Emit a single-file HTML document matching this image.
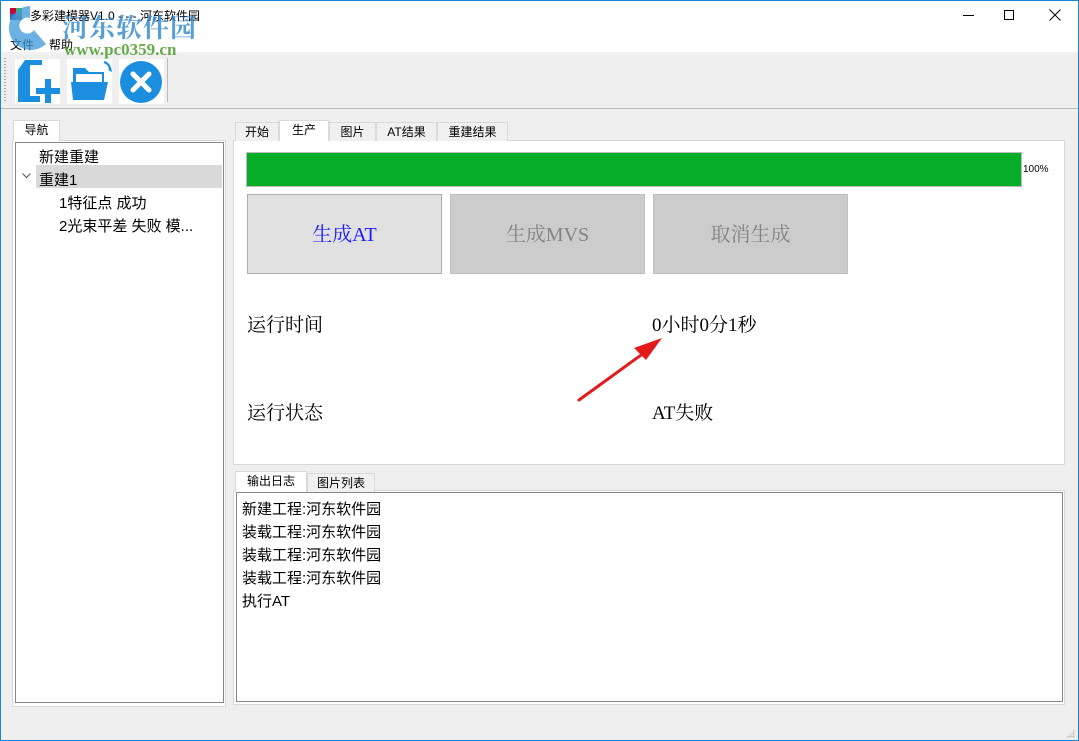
<!DOCTYPE html>
<html><head><meta charset="utf-8"><style>
*{margin:0;padding:0;box-sizing:border-box}
body{width:1079px;height:741px;overflow:hidden;background:#efefef;font-family:"Liberation Sans","Microsoft YaHei","Noto Sans CJK SC",sans-serif;position:relative;font-size:12px;color:#000}
.abs{position:absolute}
.serif{font-family:"Liberation Serif","Noto Serif CJK SC",serif}
.tab{position:absolute;height:19px;border:1px solid #d9d9d9;border-bottom:none;background:#f0f0f0;font-size:12px;text-align:center;line-height:18px}
.tab.sel{background:#fff;height:21px;top:-2px}
.btn{position:absolute;top:194px;width:195px;height:80px;border:1px solid #adadad;font-size:20px;text-align:center;line-height:80px}
.tree div{position:absolute;font-size:15px;white-space:nowrap}
.log div{font-size:15px;line-height:23px}
</style></head><body>
<div class="abs" style="left:0;top:0;width:1079px;height:741px;border:1px solid #1883d7;z-index:10;pointer-events:none"></div>
<div class="abs" style="left:0;top:0;width:1079px;height:53px;background:#fff"></div>
<div class="abs" style="left:0;top:52px;width:1079px;height:2px;background:#f2f2f2"></div>
<div class="abs" style="left:10px;top:8px;width:6px;height:6px;background:#c03"></div>
<div class="abs" style="left:16px;top:8px;width:6px;height:6px;background:#3b6"></div>
<div class="abs" style="left:10px;top:14px;width:6px;height:6px;background:#36c"></div>
<div class="abs" style="left:16px;top:14px;width:6px;height:6px;background:#777"></div>
<div class="abs" style="left:30px;top:7px;font-size:12px">多彩建模器V1.0 - - - 河东软件园</div>
<div class="abs" style="left:963px;top:15px;width:11px;height:1px;background:#000"></div>
<div class="abs" style="left:1004px;top:10px;width:10px;height:10px;border:1px solid #000"></div>
<svg class="abs" style="left:1049px;top:9px" width="12" height="12"><path d="M0.5 0.5 L11.5 11.5 M11.5 0.5 L0.5 11.5" stroke="#000" stroke-width="1"/></svg>
<div class="abs" style="left:10px;top:36px;font-size:12px">文件</div>
<div class="abs" style="left:49px;top:36px;font-size:12px">帮助</div>
<svg class="abs" style="left:0;top:0" width="60" height="56"><path d="M30 6 A22 22 0 1 0 46 44 L34 30 A8 8 0 1 1 30 18Z" fill="#3c98d8" opacity=".75"/></svg>
<div class="abs serif" style="left:62px;top:8px;font-size:26px;font-weight:bold;color:#2f86cc;opacity:.8;letter-spacing:1px">河东软件园</div>
<div class="abs serif" style="left:64px;top:40px;font-size:17px;font-weight:bold;color:#4c9c2c;opacity:.85">www.pc0359.cn</div>
<div class="abs" style="left:0;top:108px;width:1079px;height:1px;background:#b9b9b9"></div>
<div class="abs" style="left:4px;top:58px;width:2px;height:44px;background:repeating-linear-gradient(#aaa 0 1px,transparent 1px 3px)"></div>
<div class="abs" style="left:167px;top:58px;width:1px;height:44px;background:#bbb"></div>
<div class="abs" style="left:15px;top:59px;width:45px;height:45px;background:#fff"></div>
<div class="abs" style="left:67px;top:59px;width:45px;height:45px;background:#fff"></div>
<div class="abs" style="left:119px;top:59px;width:45px;height:45px;background:#fff"></div>
<svg class="abs" style="left:14px;top:58px" width="48" height="46"><path d="M11 2 H28 V7 H16 V38 H26 V44 H4 V12 Z" fill="#1c8ee0"/><path d="M4 12 L12 2 V12 Z" fill="#1c8ee0"/><rect x="31" y="21" width="6" height="24" fill="#1c8ee0"/><rect x="22" y="30" width="24" height="6" fill="#1c8ee0"/></svg>
<svg class="abs" style="left:68px;top:60px" width="46" height="42"><path d="M36 2 Q42 4 42 10" stroke="#1c8ee0" stroke-width="2" fill="none"/><path d="M40 10 l3 -3 l1 5z" fill="#1c8ee0"/><path d="M5 8 H17 L21 12 H36 V38 H5Z" fill="#1c8ee0"/><rect x="8" y="14" width="26" height="10" fill="#fff"/><path d="M3 22 H40 L36 40 H5Z" fill="#1c8ee0"/></svg>
<svg class="abs" style="left:119px;top:60px" width="44" height="44"><circle cx="22" cy="22" r="21" fill="#1c8ee0"/><path d="M14 14 L30 30 M30 14 L14 30" stroke="#fff" stroke-width="5" stroke-linecap="round"/></svg>
<div class="abs" style="left:12px;top:140px;width:214px;height:567px;background:#fff;border:1px solid #d9d9d9"></div>
<div class="abs tab sel" style="left:13px;width:47px;height:21px;top:120px">导航</div>
<div class="abs tree" style="left:15px;top:142px;width:209px;height:561px;border:1px solid #828790;background:#fff">
<div style="top:22px;width:186px;height:23px;background:#d9d9d9;left:20px"></div>
<div style="left:23px;top:3px">新建重建</div>
<svg style="position:absolute;left:6px;top:30px" width="9" height="6"><path d="M0.5 0.5 L4.5 4.5 L8.5 0.5" stroke="#555" fill="none"/></svg>
<div style="left:23px;top:26px">重建1</div>
<div style="left:43px;top:49px">1特征点 成功</div>
<div style="left:43px;top:72px">2光束平差 失败 模...</div>
</div>
<div class="abs" style="left:233px;top:140px;width:832px;height:325px;background:#fff;border:1px solid #d9d9d9"></div>
<div class="abs" style="left:235px;top:122px;height:19px;width:300px">
<div class="tab" style="left:0;width:44px">开始</div>
<div class="tab sel" style="left:44px;width:50px">生产</div>
<div class="tab" style="left:94px;width:47px">图片</div>
<div class="tab" style="left:141px;width:61px">AT结果</div>
<div class="tab" style="left:202px;width:71px">重建结果</div>
</div>
<div class="abs" style="left:246px;top:152px;width:776px;height:35px;background:#06ae28;border:1px solid #bcbcbc"></div>
<div class="abs" style="left:1023px;top:164px;font-size:10px">100%</div>
<div class="btn serif" style="left:247px;background:#e1e1e1;color:#1a1aff">生成AT</div>
<div class="btn serif" style="left:450px;background:#cccccc;color:#838383;border-color:#bfbfbf">生成MVS</div>
<div class="btn serif" style="left:653px;background:#cccccc;color:#838383;border-color:#bfbfbf">取消生成</div>
<div class="abs serif" style="left:247px;top:310px;font-size:19px">运行时间</div>
<div class="abs serif" style="left:652px;top:310px;font-size:19px">0小时0分1秒</div>
<div class="abs serif" style="left:247px;top:398px;font-size:19px">运行状态</div>
<div class="abs serif" style="left:652px;top:398px;font-size:19px">AT失败</div>
<svg class="abs" style="left:570px;top:330px" width="100" height="80"><path d="M9 70 L78 20" stroke="#e31a1a" stroke-width="3" stroke-linecap="round"/><path d="M92 8 L64 18 L76 30Z" fill="#e31a1a"/></svg>
<div class="abs" style="left:233px;top:490px;width:832px;height:215px;background:#fff;border:1px solid #d9d9d9"></div>
<div class="abs" style="left:235px;top:473px;height:19px;width:200px">
<div class="tab sel" style="left:0;width:72px">输出日志</div>
<div class="tab" style="left:72px;width:68px">图片列表</div>
</div>
<div class="abs log" style="left:236px;top:492px;width:827px;height:210px;border:1px solid #828790;background:#fff;padding:5px 0 0 5px">
<div>新建工程:河东软件园</div><div>装载工程:河东软件园</div><div>装载工程:河东软件园</div><div>装载工程:河东软件园</div><div>执行AT</div>
</div>
<div class="abs" style="left:1066px;top:729px;width:9px;height:9px;background:radial-gradient(circle,#bbb 1px,transparent 1.2px) 0 0/3px 3px;clip-path:polygon(100% 0,100% 100%,0 100%)"></div>
</body></html>
